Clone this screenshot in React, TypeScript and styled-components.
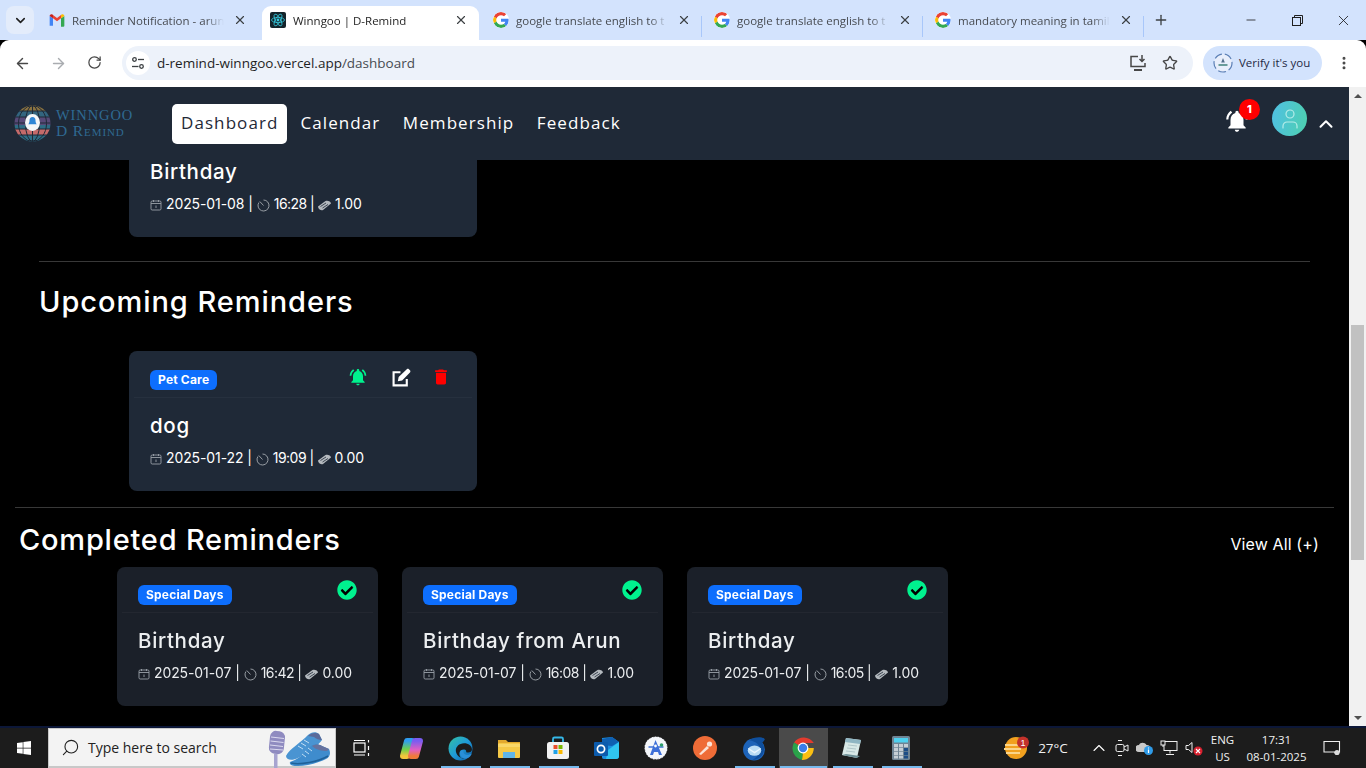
import React from "react";
import styled, { createGlobalStyle } from "styled-components";
import { MdNotificationsActive, MdDelete } from "react-icons/md";
import { FaCheckCircle, FaWindows } from "react-icons/fa";
import { ArrowLeft, ArrowRight, RotateCw, Star, X, Plus, Minus, ChevronDown, ChevronUp, Search, EllipsisVertical, User } from "lucide-react";

const Global = createGlobalStyle`
  html, body { margin: 0; padding: 0; width: 1366px; height: 768px; overflow: hidden; background: #000; }
  * { box-sizing: border-box; }
  #root { width: 1366px; height: 768px; }
`;

const Page = styled.div`
  width: 1366px; height: 768px; display: flex; flex-direction: column; overflow: hidden;
  font-family: "Inter", "Liberation Sans", sans-serif;
`;
/* ---------- browser chrome ---------- */
const TabStrip = styled.div`
  height: 40px; background: #d3e3fd; display: flex; align-items: flex-start; padding-left: 6px; flex: none;
`;
const TabMenu = styled.div`
  width: 28px; height: 28px; margin-top: 6px; margin-right: 3px; border-radius: 8px; background: #e3ecfb;
  display: flex; align-items: center; justify-content: center; color: #1f1f1f; flex: none;
`;
const Tab = styled.div<{ $w: number; $active?: boolean; $sep?: boolean }>`
  width: ${p => p.$w}px; height: 34px; margin: 6px ${p => (p.$active ? 2 : 0)}px 0 ${p => (p.$active ? 3 : 0)}px; padding: 0 0 6px ${p => (p.$active ? 8 : 12)}px; display: flex; align-items: center;
  background: ${p => (p.$active ? "#fff" : "transparent")}; border-radius: 9px 9px 0 0; flex: none; position: relative;
  color: ${p => (p.$active ? "#1f1f1f" : "#474b51")};
  &::after { content: ""; display: ${p => (p.$sep ? "block" : "none")}; position: absolute; right: 0; top: 10px; height: 21px; width: 1px; background: #a8c7fa; }
`;
const TabTitle = styled.span`
  margin-left: 7px; width: 152px; overflow: hidden; white-space: nowrap; font: 11.5px "Open Sans", "Liberation Sans", sans-serif; flex: none;
  mask-image: linear-gradient(90deg, #000 88%, transparent 100%);
`;
const TabClose = styled.span`
  margin-left: 9px; display: flex; color: #3c4043;
`;
const NewTab = styled.div`
  width: 34px; display: flex; justify-content: center; margin-top: 12px; color: #3c4043; flex: none;
`;
const WindowButtons = styled.div`
  margin-left: auto; display: flex; align-items: center; height: 40px; padding-right: 0; color: #1f1f1f;
`;
const WindowButton = styled.div`
  width: 46px; height: 40px; display: flex; align-items: center; justify-content: center;
`;
const Toolbar = styled.div`
  height: 47px; background: #fff; border-radius: 9px 9px 0 0; display: flex; align-items: center; flex: none; padding-bottom: 1px;
`;
const NavBtn = styled.div<{ $dim?: boolean }>`
  width: 36px; display: flex; justify-content: center; color: ${p => (p.$dim ? "#a9acb0" : "#474747")};
`;
const NavBtns = styled.div`
  display: flex; padding-left: 4px; width: 122px;
`;
const Omnibox = styled.div`
  width: 1071px; height: 34px; border-radius: 17px; background: #edf2fa; display: flex; align-items: center; padding: 0 15px 0 4px;
`;
const SiteInfo = styled.div`
  width: 24px; height: 24px; border-radius: 50%; background: #fff; display: flex; align-items: center; justify-content: center; margin-right: 7px;
`;
const Url = styled.span`
  font: 13.5px "Open Sans", "Liberation Sans", sans-serif; color: #1f1f1f;
  & > i { font-style: normal; color: #474b51; }
`;
const OmniIcons = styled.div`
  margin-left: auto; display: flex; align-items: center; gap: 15px; color: #474747;
`;
const Verify = styled.div`
  margin-left: 10px; width: 119px; height: 34px; border-radius: 17px; background: #d3e3fd; display: flex; align-items: center; padding: 0 0 1px 10px; gap: 6px;
  font: 11.5px "Open Sans", "Liberation Sans", sans-serif; color: #1f2a44; white-space: nowrap;
`;
const KebabSlot = styled.div`
  width: 44px; display: flex; justify-content: center; color: #474747;
`;
/* ---------- site ---------- */
const Viewport = styled.div`
  flex: 1; min-height: 0; display: flex;
`;
const Site = styled.div`
  flex: 1; min-width: 0; display: flex; flex-direction: column; background: #000; color: #fff;
`;
const Header = styled.header`
  height: 73px; flex: none; background: #1f2937; display: flex; align-items: center; position: relative; z-index: 2; padding-left: 14px;
`;
const Brand = styled.div`
  width: 158px; display: flex; align-items: center; gap: 5px; flex: none;
`;
const BrandText = styled.div`
  font-family: "Liberation Serif", serif; font-size: 14.5px; line-height: 15px; letter-spacing: .9px; color: #2f6a92; white-space: nowrap; margin-top: -2px;
`;
const BrandSmall = styled.div`
  font-variant: small-caps; font-size: 15.5px; letter-spacing: .9px;
`;
const Menu = styled.nav`
  display: flex; align-items: center; gap: 0;
`;
const MenuItem = styled.a<{ $active?: boolean }>`
  height: 40px; padding: 0 ${p => (p.$active ? 9 : 0)}px 2px; margin-right: ${p => (p.$active ? 13 : 22.5)}px; display: flex; align-items: center; border-radius: 5px;
  background: ${p => (p.$active ? "#fff" : "transparent")}; color: ${p => (p.$active ? "#1f2937" : "#fff")};
  font: 500 17px "Open Sans", "Liberation Sans", sans-serif; letter-spacing: 1.08px; white-space: nowrap;
`;
const HeaderRight = styled.div`
  margin-left: auto; display: flex; align-items: center; padding-right: 12px;
`;
const BellWrap = styled.div`
  position: relative; display: flex; margin-right: 22px; margin-top: -6px;
`;
const Badge = styled.span`
  position: absolute; top: -9px; left: 15px; width: 21px; height: 21px; border-radius: 50%; background: #f00; color: #fff;
  font: 800 11px "Inter", sans-serif; display: flex; align-items: center; justify-content: center;
`;
const Avatar = styled.div`
  width: 35px; height: 35px; border-radius: 50%; background: linear-gradient(100deg, #50c0e4, #4dd0ae); display: flex; align-items: center; justify-content: center; margin-top: -10px; color: #b5ece8;
`;
const Caret = styled.div`
  margin-left: 8px; display: flex; color: #fff;
`;
const Content = styled.main`
  flex: 1; min-height: 0; overflow: hidden; display: flex; flex-direction: column; align-items: flex-start;
`;
const Card = styled.article<{ $done?: boolean }>`
  width: ${p => (p.$done ? 261 : 348)}px; height: ${p => (p.$done ? 139 : 140)}px; flex: none; background: #1f2937; border-radius: 8px; padding: 0 5px;
  ${p => p.$done && `background: #1b2029; color: #eceef0; filter: blur(.35px);`}
`;
const FirstCard = styled(Card)`
  margin: -63px 0 0 129px;
`;
const CardTop = styled.div<{ $done?: boolean }>`
  height: ${p => (p.$done ? 46 : 47)}px; display: flex; align-items: flex-start; padding: ${p => (p.$done ? 18 : 19)}px 16px 0; border-bottom: 1px solid rgba(255,255,255,.035);
`;
const Label = styled.span`
  height: 20px; padding: 0 8px; border-radius: 6px; background: #0d6efd; color: #fff; font: 700 12px/20px "Inter", sans-serif; letter-spacing: .2px; white-space: nowrap;
`;
const Actions = styled.div`
  margin-left: auto; display: flex; align-items: center; margin-top: -3px; margin-right: -7px;
`;
const Action = styled.span<{ $c: string; $w: number }>`
  color: ${p => p.$c}; width: ${p => p.$w}px; display: flex; justify-content: center;
`;
const DoneMark = styled.span`
  margin-left: auto; margin-top: -5px; margin-right: 0; display: flex; color: #00f28e; position: relative;
  &::before { content: ""; position: absolute; inset: 4px; background: #000; border-radius: 50%; }
  & > svg { position: relative; }
`;
const CardBody = styled.div`
  padding: 15px 16px 0;
`;
const CardTitle = styled.h3`
  margin: 0; font: 500 20.5px/26px "Inter", sans-serif; letter-spacing: .68px; white-space: nowrap;
`;
const Meta = styled.div`
  margin-top: 9px; display: flex; align-items: center; font: 400 14px/20px "Inter", sans-serif; letter-spacing: -.1px; white-space: nowrap; gap: 4px;
`;
const MetaText = styled.span<{ $tight?: boolean }>`
  letter-spacing: ${p => (p.$tight ? "-.55px" : "-.1px")};
`;
const Rule = styled.hr<{ $l: number; $r: number }>`
  align-self: stretch; margin: 0 ${p => p.$r}px 0 ${p => p.$l}px; border: 0; border-top: 1px solid rgba(255,255,255,.22); flex: none; height: 1px;
`;
const Rule1 = styled(Rule)`
  margin-top: 24px;
`;
const Heading = styled.h2`
  margin: 0; font: 500 29px/36px "Inter", sans-serif; letter-spacing: .78px; white-space: nowrap;
`;
const UpHeading = styled(Heading)`
  margin: 22px 0 31px 39px; letter-spacing: .95px;
`;
const UpCard = styled(Card)`
  margin-left: 129px; margin-bottom: 16px;
`;
const HeadRow = styled.div`
  align-self: stretch; display: flex; align-items: center; justify-content: space-between; padding: 14px 30px 0 19px; height: 50px; margin-bottom: 9px;
`;
const ViewAll = styled.a`
  font: 400 16px "Inter", sans-serif; color: #fff; margin-top: 8px; letter-spacing: .12px;
`;
const CardRow = styled.div`
  display: flex; gap: 24px; padding-left: 117px;
`;
/* scrollbar */
const Scrollbar = styled.div`
  width: 17px; flex: none; background: #f1f1f1; display: flex; flex-direction: column; align-items: center;
`;
const ScrollArrow = styled.div<{ $down?: boolean }>`
  height: 17px; flex: none; width: 100%; display: flex; align-items: center; justify-content: center;
  &::after { content: ""; border-left: 4px solid transparent; border-right: 4px solid transparent; ${p => (p.$down ? "border-top" : "border-bottom")}: 4px solid #505050; }
`;
const ScrollThumb = styled.div`
  width: 13px; height: 235px; background: #c1c1c1; margin-top: 221px; flex: none;
`;
const ScrollRest = styled.div`
  flex: 1;
`;
/* taskbar */
const Taskbar = styled.footer`
  height: 42px; flex: none; background: #1c1c1c; border-top: 2px solid #0c1738; display: flex; color: #fff;
`;
const Start = styled.div`
  width: 48px; display: flex; align-items: center; justify-content: center;
`;
const SearchBox = styled.div`
  width: 288px; margin-right: 1.5px; background: #f3f3f3; border: 1px solid #c8c8c8; border-bottom-width: 2px; display: flex; align-items: center; color: #222; padding-left: 12px;
  font: 14px "Open Sans", "Liberation Sans", sans-serif;
`;
const SearchText = styled.span`
  margin-left: 8px;
`;
const SearchArt = styled.div`
  margin-left: auto; margin-right: 3px; display: flex;
`;
const Slot = styled.div<{ $on?: boolean; $run?: boolean }>`
  width: 49px; flex: none; display: flex; align-items: center; justify-content: center; position: relative;
  background: ${p => (p.$on ? "#4a4a4a" : "transparent")};
  &::after { content: ""; display: ${p => (p.$run ? "block" : "none")}; position: absolute; left: ${p => (p.$on ? 1 : 5)}px; right: ${p => (p.$on ? 1 : 4)}px; bottom: 0; height: 2px; background: #76b9ed; }
`;
const Tray = styled.div<{ $w: number }>`
  width: ${p => p.$w}px; flex: none; display: flex; align-items: center; justify-content: center; position: relative;
`;
const TrayText = styled.div`
  font: 11.5px/17px "Open Sans", "Liberation Sans", sans-serif; text-align: center; color: #f0f0f0; white-space: nowrap;
`;
const Temp = styled.span`
  font: 13.5px "Open Sans", "Liberation Sans", sans-serif; color: #f0f0f0; margin-left: 6px;
`;

/* ---------- drawings ---------- */
const GoogleG = () => (
  <svg width="16" height="16" viewBox="0 0 48 48" style={{ flex: "none", background: "#fff", borderRadius: "50%" }}>
    <path fill="#EA4335" d="M24 9.5c3.5 0 6.6 1.2 9.1 3.6l6.8-6.8C35.8 2.5 30.4 0 24 0 14.6 0 6.5 5.4 2.6 13.2l7.9 6.2C12.4 13.7 17.7 9.5 24 9.5z" />
    <path fill="#4285F4" d="M46.9 24.5c0-1.6-.1-3.1-.4-4.5H24v9h12.9c-.6 3-2.2 5.5-4.8 7.2l7.7 6c4.5-4.2 7.1-10.3 7.1-17.7z" />
    <path fill="#FBBC05" d="M10.5 28.6c-.5-1.4-.8-3-.8-4.6s.3-3.2.8-4.6l-7.9-6.2C1 16.5 0 20.1 0 24s1 7.5 2.6 10.8l7.9-6.2z" />
    <path fill="#34A853" d="M24 48c6.5 0 11.9-2.1 15.9-5.8l-7.7-6c-2.2 1.4-4.9 2.3-8.2 2.3-6.3 0-11.6-4.2-13.5-9.9l-7.9 6.2C6.5 42.6 14.6 48 24 48z" />
  </svg>
);
const GmailIcon = () => (
  <svg width="16" height="16" viewBox="0 0 24 24" style={{ flex: "none" }}>
    <path fill="#4285F4" d="M1 20.5V6l5 3.5v11H2.5A1.5 1.5 0 0 1 1 20.5z" />
    <path fill="#34A853" d="M18 20.5v-11L23 6v14.5a1.5 1.5 0 0 1-1.5 1.5H18z" />
    <path fill="#EA4335" d="M6 9.5V4.5L12 9l6-4.5v5L12 14z" />
    <path fill="#C5221F" d="M1 6c0-2.2 2.5-3.4 4.2-2.1L6 4.5v5L1 6z" />
    <path fill="#FBBC04" d="M18 4.5l.8-.6C20.500 2.600 23 3.800 23 6l-5 3.500z" />
  </svg>
);
const ReactFav = () => (
  <svg width="16" height="16" viewBox="0 0 16 16" style={{ flex: "none" }}>
    <rect width="16" height="16" rx="2" fill="#14242b" />
    <g fill="none" stroke="#35c8dc" strokeWidth=".8">
      <ellipse cx="8" cy="8" rx="6.500" ry="2.600" />
      <ellipse cx="8" cy="8" rx="6.500" ry="2.600" transform="rotate(60 8 8)" />
      <ellipse cx="8" cy="8" rx="6.500" ry="2.600" transform="rotate(120 8 8)" />
    </g>
    <circle cx="8" cy="8" r="1.400" fill="#35c8dc" />
  </svg>
);
const TuneIcon = () => (
  <svg width="14" height="14" viewBox="0 0 14 14" fill="none" stroke="#3c4043" strokeWidth="1.300">
    <circle cx="3.500" cy="3.500" r="1.800" /><path d="M7 3.500h6" />
    <circle cx="10.500" cy="10.500" r="1.800" /><path d="M1 10.500h6.500" />
  </svg>
);
const InstallIcon = () => (
  <svg width="18" height="18" viewBox="0 0 18 18" fill="none" stroke="#474747" strokeWidth="1.500">
    <path d="M9 2.500H2v10h14V9" /><path d="M5 16h8" strokeWidth="2" /><path d="M13 1v6M10.500 5l2.500 2.500L15.500 5" />
  </svg>
);
const VerifyIcon = () => (
  <svg width="20" height="20" viewBox="0 0 20 20">
    <circle cx="10" cy="10" r="9" fill="#e8eefb" stroke="#5b7fb5" strokeWidth="1.200" strokeDasharray="8 3" />
    <path d="M10 5l1.800 4.500H8.200z" fill="#546e8a" />
    <rect x="5.500" y="11" width="9" height="2" fill="#6a9c9a" />
  </svg>
);
const Globe = () => (
  <svg width="37" height="37" viewBox="0 0 37 37">
    <defs><clipPath id="gl"><circle cx="18.500" cy="18.500" r="18" /></clipPath></defs>
    <g clipPath="url(#gl)">
      <rect y="0" width="37" height="6" fill="#8b7340" />
      <rect y="6" width="37" height="6" fill="#33657f" />
      <rect y="12" width="37" height="8" fill="#584a78" />
      <rect y="20" width="37" height="4" fill="#2f6d85" />
      <rect y="24" width="37" height="6" fill="#c46a6a" />
      <rect y="30" width="37" height="7" fill="#2f6d85" />
      <g fill="none" stroke="#1f2937" strokeWidth="1">
        <path d="M0 6h37M0 12h37M0 18h37M0 24h37M0 30h37" />
        <ellipse cx="18.500" cy="18.500" rx="7" ry="18" />
        <ellipse cx="18.500" cy="18.500" rx="14" ry="18" />
        <path d="M18.500 0v37" />
      </g>
    </g>
    <ellipse cx="18.500" cy="17.500" rx="7.500" ry="8.500" fill="#f4f6f8" />
    <path d="M18.500 12c-2 0-3 1.500-3 3.500 0 2-.7 3-1.200 3.800h8.400c-.5-.8-1.200-1.800-1.200-3.800 0-2-1-3.500-3-3.500z" fill="#2f86d6" />
  </svg>
);
const EditIcon = () => (
  <svg width="19" height="19" viewBox="0 0 18 18">
    <path d="M14 10.500V16.500H1.500V4H8" fill="none" stroke="currentColor" strokeWidth="2" />
    <path d="M5.500 12.500l.8-4L14 1.200c.6-.6 1.500-.6 2 0l1 1c.6.6.6 1.500 0 2L9.600 11.800z" fill="currentColor" />
  </svg>
);
const CalIcon = () => (
  <svg width="12" height="12" viewBox="0 0 12 12" fill="none" stroke="#9aa0a8" strokeWidth=".9" style={{ marginTop: 2, flex: "none" }}>
    <rect x="1" y="2" width="10" height="9" rx="1.200" /><path d="M1 4.500h10M3.500 1v2M8.500 1v2M6 6.500v2.500" />
  </svg>
);
const TimerIcon = () => (
  <svg width="13" height="13" viewBox="0 0 13 13" fill="none" stroke="#a4a9af" strokeWidth=".9" style={{ marginTop: 2, flex: "none" }}>
    <path d="M6.500 1a5.500 5.500 0 1 1-4.600 2.500" /><path d="M2.800 2.500l3.700 4" />
  </svg>
);
const CashIcon = () => (
  <svg width="13" height="11" viewBox="0 0 13 11" style={{ marginTop: 2, flex: "none" }}>
    <path d="M0 6.500L7.500 1c1.800-1 5.500.3 5.500 2.500L5 10c-1.800 1-5-1-5-3.500z" fill="#b4b9be" />
    <path d="M2.500 6.500L8 3M4.500 8L10 4.500" stroke="#1f2937" strokeWidth=".8" />
  </svg>
);
const MicShoes = () => (
  <svg width="64" height="40" viewBox="0 0 64 40">
    <rect x="1.500" y="3" width="15" height="23" rx="6" fill="#8f8bc0" transform="rotate(6 9 14)" />
    <path d="M3 9l13 1.500M2.500 13l13 1.500M2 17l13 1.500M2 21l13 1" stroke="#dcdaf0" strokeWidth="1" />
    <rect x="6" y="26" width="3.500" height="14" fill="#a7a4d0" />
    <path d="M18 28C22 20 34 14 40 7C43 4 48 3 51 6L54 12C50 18 38 26 30 30C24 33 18 32 18 28z" fill="#4a94d2" />
    <path d="M40 8c3-3 8-4 11-2l3 6c-3 0-6-1-8-3z" fill="#5a6a9a" />
    <path d="M30 18l5 3M33 15l5 3M36 12l5 3" stroke="#bfdcf3" strokeWidth="1" />
    <path d="M22 34C26 33 38 26 42 19C44 16 50 15 54 18L61 21C63 25 62 29 58 31C50 35 38 38 30 38C25 38 21 37 22 34z" fill="#3f8ccd" />
    <path d="M44 18c3-2 7-2 10 0l7 3-2 2c-5 0-11-1-15-5z" fill="#66729e" />
    <path d="M23 35c9 2 27-1 37-7" stroke="#1f6199" strokeWidth="1.500" fill="none" />
    <path d="M34 26l4 3M37 23l4 3M40 20l4 3" stroke="#bfdcf3" strokeWidth="1" />
  </svg>
);
const TaskView = () => (
  <svg width="18" height="18" viewBox="0 0 18 18" fill="none" stroke="#fff" strokeWidth="1.200">
    <rect x="1" y="4" width="11" height="9" /><path d="M1 1.500h11M1 16h11M15.500 1v2.500M15.500 7v4M15.500 14v3" />
  </svg>
);
const Copilot = () => (
  <svg width="25" height="23" viewBox="0 0 25 23">
    <defs>
      <linearGradient id="cp" x1="0" y1="0" x2="0" y2="1"><stop offset="0" stopColor="#2f9df0" /><stop offset=".55" stopColor="#6fd04a" /><stop offset="1" stopColor="#f5c53c" /></linearGradient>
      <linearGradient id="cp2" x1="0" y1="0" x2="0" y2="1"><stop offset="0" stopColor="#7a5cf0" /><stop offset=".6" stopColor="#e35fc0" /><stop offset="1" stopColor="#f07a3a" /></linearGradient>
    </defs>
    <path d="M8 4L13 4L8 19L4 19z" fill="url(#cp)" stroke="url(#cp)" strokeWidth="6" strokeLinejoin="round" />
    <path d="M16 4L21 4L17 19L12 19z" fill="url(#cp2)" stroke="url(#cp2)" strokeWidth="6" strokeLinejoin="round" />
  </svg>
);
const Edge = () => (
  <svg width="25" height="25" viewBox="0 0 24 24">
    <defs><linearGradient id="ed" x1="0" y1="0" x2="1" y2="1"><stop offset="0" stopColor="#35c1a0" /><stop offset=".5" stopColor="#1f9bd8" /><stop offset="1" stopColor="#0c59a4" /></linearGradient></defs>
    <circle cx="12" cy="12" r="11.500" fill="url(#ed)" />
    <path d="M23 13c0-3.500-3.500-6-7.500-6-5 0-8 3.500-8 7 0 4 4 8 9 8-4 .5-6-3-5.500-6 .5-2 2-3 4-3 2.500 0 2.500 1.500 2.500 2.500 2.500 1 5.500 0 5.500-2.500z" fill="#1c1c1c" />
    <path d="M11.500 16c0 3 2.500 6 6 5.500 3-.5 5-3 5.500-5-3 2-7 2-8-.5-.7-1.500 0-2.500 0-2.500-2 0-3.500 1-3.500 2.500z" fill="#2a8fd8" />
  </svg>
);
const Folder = () => (
  <svg width="24" height="22" viewBox="0 0 24 22">
    <path d="M1 3h8l2 2h12v4H1z" fill="#e2a92e" />
    <rect x="1" y="6" width="22" height="15" rx="1" fill="#f5c947" />
    <path d="M6 21v-6h12v6" fill="#5fb5e8" />
    <rect x="1" y="7" width="22" height="3" fill="#f9d768" />
  </svg>
);
const Store = () => (
  <svg width="24" height="24" viewBox="0 0 24 24">
    <path d="M7 6V3a1.500 1.500 0 0 1 1.500-1.500h7A1.500 1.500 0 0 1 17 3v3" fill="none" stroke="#35b8e8" strokeWidth="1.800" />
    <rect x="1" y="6" width="22" height="17" rx="2.500" fill="#f2f2f2" />
    <rect x="7.500" y="9" width="4" height="4" fill="#ea4f2c" /><rect x="12.500" y="9" width="4" height="4" fill="#7ab800" />
    <rect x="7.500" y="14" width="4" height="4" fill="#1fa1e8" /><rect x="12.500" y="14" width="4" height="4" fill="#fbb900" />
  </svg>
);
const Outlook = () => (
  <svg width="26" height="24" viewBox="0 0 26 24">
    <path d="M8 2l10-1 7 5v14c0 2-1 3-3 3H10c-1.500 0-2-1-2-2z" fill="#1b8fe0" />
    <path d="M18 1l7 5-7 4-10-1V3z" fill="#0f5fb0" /><path d="M14 14l11-8v14c0 2-1 3-3 3H12z" fill="#30c5f0" />
    <rect x="0" y="6" width="14" height="14" rx="1" fill="#0c5bac" />
    <circle cx="7" cy="13" r="3.600" fill="none" stroke="#fff" strokeWidth="1.700" />
  </svg>
);
const AppA = () => (
  <svg width="24" height="24" viewBox="0 0 24 24">
    <circle cx="12" cy="12" r="11.500" fill="#f4f6fa" stroke="#111" strokeDasharray="1.500 1.500" strokeWidth=".6" />
    <path d="M11.500 4l-5.500 15h3l1-3h4l1 3h3z" fill="#3d6fd8" /><path d="M4.500 11h15" stroke="#3d6fd8" strokeWidth="1.500" />
    <circle cx="17.500" cy="9" r="1.800" fill="#2f9e6a" /><circle cx="11.500" cy="10" r="1.400" fill="#fff" />
  </svg>
);
const Postman = () => (
  <svg width="24" height="24" viewBox="0 0 24 24">
    <circle cx="12" cy="12" r="12" fill="#ef6c37" />
    <path d="M6 18l8-8 2 2-8 7z" fill="#fbe3d7" /><circle cx="16.500" cy="8" r="2.600" fill="#fbe3d7" />
  </svg>
);
const Thunderbird = () => (
  <svg width="25" height="25" viewBox="0 0 24 24">
    <circle cx="11.500" cy="13" r="10.500" fill="#1d63b8" />
    <path d="M7 4c4-3 12-4 15-1-1 2-2 3-3 3 3 3 3 10-1 14-2 2-5 3-8 3 4-2 7-6 7-11 0-4-4-7-10-8z" fill="#0f4f9d" />
    <ellipse cx="12" cy="14" rx="6.500" ry="5" fill="#b9dcf5" />
    <path d="M6 12l6 4 6-4" stroke="#eaf6ff" strokeWidth="1.300" fill="none" />
  </svg>
);
const Chrome = () => (
  <svg width="24" height="24" viewBox="0 0 24 24">
    <path d="M12 12L3 6.500A12 12 0 0 1 22.800 7H12z" fill="#e33b2e" />
    <path d="M12 12h10.800A12 12 0 0 1 11 24z" fill="#f9bf13" />
    <path d="M12 12L11 24A12 12 0 0 1 3 6.500z" fill="#2aa24a" />
    <circle cx="12" cy="12" r="5.400" fill="#fff" /><circle cx="12" cy="12" r="4.200" fill="#3a7de8" />
  </svg>
);
const Notepad = () => (
  <svg width="24" height="24" viewBox="0 0 24 24">
    <path d="M6 2l15 2-4 18-15-3z" fill="#d8e8e6" />
    <path d="M6 2l15 2-1 4-15-2z" fill="#8fb5c2" /><path d="M2 19l15 3 3-2-14-2z" fill="#6d8f96" />
    <path d="M8 9l9 1M7 12l9 1M6 15l9 1" stroke="#9fb7bb" strokeWidth=".7" />
  </svg>
);
const Calculator = () => (
  <svg width="18" height="24" viewBox="0 0 18 24">
    <rect width="18" height="24" rx="1.500" fill="#6f8494" /><rect x="2" y="2" width="14" height="4.500" fill="#4fd0ee" />
    {[8, 12, 16].flatMap(y => [2, 7, 12].map(x => (
      <rect key={`${x}-${y}`} x={x} y={y} width="4" height={3.300} fill={x === 12 && y > 8 ? "#1d4d86" : "#c5ced5"} />
    )))}
    <rect x="2" y="20" width="4" height="2.500" fill="#c5ced5" /><rect x="7" y="20" width="4" height="2.500" fill="#c5ced5" /><rect x="12" y="20" width="4" height="2.500" fill="#1d4d86" />
  </svg>
);
const Weather = () => (
  <svg width="28" height="28" viewBox="0 0 28 28">
    <circle cx="12" cy="14" r="11" fill="#f2a11f" /><path d="M1 11h17M0 15h17M2 19h14" stroke="#fbd58a" strokeWidth="1.800" />
    <circle cx="19" cy="8.500" r="6" fill="#c4322b" />
    <text x="19" y="12" fontSize="9" fill="#fff" textAnchor="middle" fontFamily="Liberation Sans">1</text>
  </svg>
);
const MeetNow = () => (
  <svg width="14" height="18" viewBox="0 0 14 18" fill="none" stroke="#eee" strokeWidth="1">
    <rect x="1" y="5.500" width="8" height="7" rx="1.500" /><path d="M9 8l4-2v6l-4-2M3 1.500h4M3 16.500h4" />
  </svg>
);
const CloudInfo = () => (
  <svg width="18" height="18" viewBox="0 0 18 18">
    <path d="M3 13a3.500 3.500 0 0 1 0-7c1-3 6-3 7.500 0A3.500 3.500 0 0 1 11 13z" fill="#c9c9c9" />
    <circle cx="12.500" cy="11.500" r="4.500" fill="#2f9be8" /><path d="M12.500 10.500v3.500M12.500 8.500v1" stroke="#fff" strokeWidth="1.200" />
  </svg>
);
const Network = () => (
  <svg width="18" height="16" viewBox="0 0 18 16" fill="none" stroke="#eee" strokeWidth="1">
    <rect x="4" y="1.500" width="13" height="9" /><path d="M10 10.500v3M6 14.500h8" /><rect x="1" y="1" width="4" height="4" fill="#1c1c1c" /><path d="M3 5v2" />
  </svg>
);
const Volume = () => (
  <svg width="18" height="16" viewBox="0 0 18 16">
    <path d="M1 5.500h2.500L7 2.500v10L3.500 9.500H1z" fill="none" stroke="#eee" strokeWidth="1" />
    <circle cx="13" cy="11" r="4.500" fill="#d8212f" /><path d="M11 9l4 4M15 9l-4 4" stroke="#fff" strokeWidth="1.100" />
  </svg>
);
const NotifyIcon = () => (
  <svg width="18" height="18" viewBox="0 0 18 18">
    <path d="M1 2.500h15.500V13l-3 0-1 1.500-1-1.500H1z" fill="none" stroke="#eee" strokeWidth="1.100" />
    <circle cx="14" cy="13.500" r="2.600" fill="#ddd" />
  </svg>
);

/* ---------- data ---------- */
const tabs = [
  { w: 222, icon: <GmailIcon />, t: "Reminder Notification - arun" },
  { w: 217, icon: <ReactFav />, t: "Winngoo | D-Remind", active: true },
  { w: 221, icon: <GoogleG />, t: "google translate english to t", sep: true },
  { w: 221, icon: <GoogleG />, t: "google translate english to t", sep: true },
  { w: 221, icon: <GoogleG />, t: "mandatory meaning in tamil", sep: true },
];
const done = [
  { t: "Birthday", d: "2025-01-07", h: "16:42", m: "0.00" },
  { t: "Birthday from Arun", d: "2025-01-07", h: "16:08", m: "1.00" },
  { t: "Birthday", d: "2025-01-07", h: "16:05", m: "1.00" },
];
const apps = [
  { el: <TaskView /> },
  { el: <Copilot /> },
  { el: <Edge />, run: true },
  { el: <Folder />, run: true },
  { el: <Store />, run: true },
  { el: <Outlook /> },
  { el: <AppA /> },
  { el: <Postman /> },
  { el: <Thunderbird />, run: true },
  { el: <Chrome />, run: true, on: true },
  { el: <Notepad />, run: true },
  { el: <Calculator />, run: true },
];

const MetaLine = ({ d, h, m }: { d: string; h: string; m: string }) => (
  <Meta>
    <CalIcon /><MetaText>{d} |</MetaText>
    <TimerIcon /><MetaText $tight>{h} |</MetaText>
    <CashIcon /><MetaText>{m}</MetaText>
  </Meta>
);

export default function App() {
  return (
    <Page>
      <Global />
      <TabStrip>
        <TabMenu><ChevronDown size={15} strokeWidth={2.5} /></TabMenu>
        {tabs.map((t, i) => (
          <Tab key={i} $w={t.w} $active={t.active} $sep={t.sep}>
            {t.icon}
            <TabTitle>{t.t}</TabTitle>
            <TabClose><X size={14} strokeWidth={2} /></TabClose>
          </Tab>
        ))}
        <NewTab><Plus size={16} strokeWidth={2} /></NewTab>
        <WindowButtons>
          <WindowButton><Minus size={14} strokeWidth={1.4} /></WindowButton>
          <WindowButton>
            <svg width="11" height="11" viewBox="0 0 11 11" fill="none" stroke="#1f1f1f"><rect x=".5" y="2.500" width="8" height="8" /><path d="M2.500 2.500V.5h8v8h-2" /></svg>
          </WindowButton>
          <WindowButton><X size={17} strokeWidth={1.2} /></WindowButton>
        </WindowButtons>
      </TabStrip>
      <Toolbar>
        <NavBtns>
          <NavBtn><ArrowLeft size={17} strokeWidth={2} /></NavBtn>
          <NavBtn $dim><ArrowRight size={17} strokeWidth={2} /></NavBtn>
          <NavBtn><RotateCw size={15} strokeWidth={2} /></NavBtn>
        </NavBtns>
        <Omnibox>
          <SiteInfo><TuneIcon /></SiteInfo>
          <Url>d-remind-winngoo.vercel.app<i>/dashboard</i></Url>
          <OmniIcons><InstallIcon /><Star size={16} strokeWidth={2} /></OmniIcons>
        </Omnibox>
        <Verify><VerifyIcon />Verify it's you</Verify>
        <KebabSlot><EllipsisVertical size={16} strokeWidth={2.5} /></KebabSlot>
      </Toolbar>
      <Viewport>
        <Site>
          <Header>
            <Brand>
              <Globe />
              <BrandText>WINNGOO<BrandSmall>D Remind</BrandSmall></BrandText>
            </Brand>
            <Menu>
              <MenuItem $active>Dashboard</MenuItem>
              <MenuItem>Calendar</MenuItem>
              <MenuItem>Membership</MenuItem>
              <MenuItem>Feedback</MenuItem>
            </Menu>
            <HeaderRight>
              <BellWrap>
                <MdNotificationsActive size={26} color="#fff" />
                <Badge>1</Badge>
              </BellWrap>
              <Avatar><User size={24} strokeWidth={1.2} /></Avatar>
              <Caret><ChevronUp size={22} strokeWidth={2.2} /></Caret>
            </HeaderRight>
          </Header>
          <Content>
            <FirstCard>
              <CardTop />
              <CardBody>
                <CardTitle>Birthday</CardTitle>
                <MetaLine d="2025-01-08" h="16:28" m="1.00" />
              </CardBody>
            </FirstCard>
            <Rule1 $l={39} $r={39} />
            <UpHeading>Upcoming Reminders</UpHeading>
            <UpCard>
              <CardTop>
                <Label>Pet Care</Label>
                <Actions>
                  <Action $c="#00f28e" $w={50}><MdNotificationsActive size={20} /></Action>
                  <Action $c="#fff" $w={36}><EditIcon /></Action>
                  <Action $c="#f00" $w={44}><MdDelete size={20} /></Action>
                </Actions>
              </CardTop>
              <CardBody>
                <CardTitle>dog</CardTitle>
                <MetaLine d="2025-01-22" h="19:09" m="0.00" />
              </CardBody>
            </UpCard>
            <Rule $l={15} $r={15} />
            <HeadRow>
              <Heading>Completed Reminders</Heading>
              <ViewAll>View All (+)</ViewAll>
            </HeadRow>
            <CardRow>
              {done.map((c, i) => (
                <Card $done key={i}>
                  <CardTop $done>
                    <Label>Special Days</Label>
                    <DoneMark><FaCheckCircle size={20} /></DoneMark>
                  </CardTop>
                  <CardBody>
                    <CardTitle>{c.t}</CardTitle>
                    <MetaLine d={c.d} h={c.h} m={c.m} />
                  </CardBody>
                </Card>
              ))}
            </CardRow>
          </Content>
        </Site>
        <Scrollbar>
          <ScrollArrow />
          <ScrollThumb />
          <ScrollRest />
          <ScrollArrow $down />
        </Scrollbar>
      </Viewport>
      <Taskbar>
        <Start><FaWindows size={16} /></Start>
        <SearchBox>
          <Search size={19} strokeWidth={1.4} style={{ transform: "scaleX(-1)" }} />
          <SearchText>Type here to search</SearchText>
          <SearchArt><MicShoes /></SearchArt>
        </SearchBox>
        {apps.map((a, i) => (
          <Slot key={i} $run={a.run} $on={a.on}>{a.el}</Slot>
        ))}
        <Tray $w={78.5} />
        <Tray $w={64}><Weather /><Temp>27°C</Temp></Tray>
        <Tray $w={18.5} />
        <Tray $w={24}><ChevronUp size={20} strokeWidth={1.300} /></Tray>
        <Tray $w={23}><MeetNow /></Tray>
        <Tray $w={23}><CloudInfo /></Tray>
        <Tray $w={25}><Network /></Tray>
        <Tray $w={24}><Volume /></Tray>
        <Tray $w={34}><TrayText>ENG<br />US</TrayText></Tray>
        <Tray $w={74}><TrayText>17:31<br />08-01-2025</TrayText></Tray>
        <Tray $w={36}><NotifyIcon /></Tray>
      </Taskbar>
    </Page>
  );
}
